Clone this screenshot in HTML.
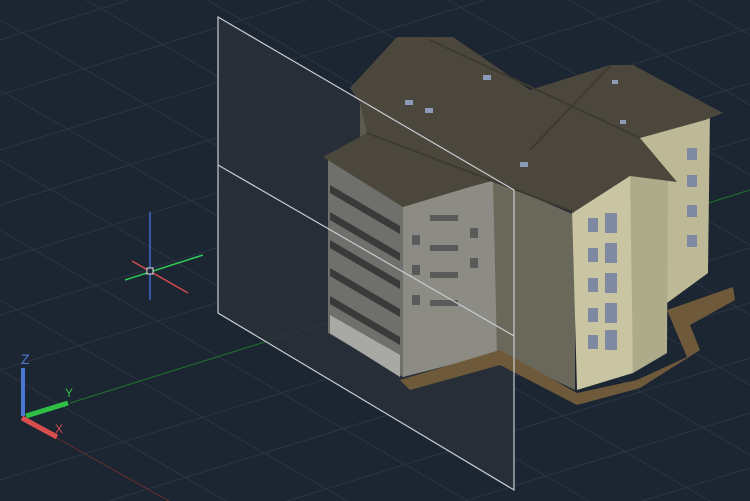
<!DOCTYPE html>
<html><head><style>html,body{margin:0;padding:0;background:#1c2532;overflow:hidden;width:750px;height:501px}svg{display:block;overflow:hidden}</style></head>
<body>
<svg width="750" height="501" viewBox="0 0 750 501" xmlns="http://www.w3.org/2000/svg" font-family="Liberation Sans, sans-serif">
<rect width="750" height="501" fill="#1c2532"/>
<g stroke="#2b3543" stroke-width="1">
<line x1="0" y1="40" x2="129" y2="0"/><line x1="0" y1="95" x2="306" y2="0"/><line x1="0" y1="150" x2="484" y2="0"/><line x1="0" y1="205" x2="661" y2="0"/><line x1="0" y1="260" x2="750" y2="28"/><line x1="0" y1="315" x2="750" y2="83"/><line x1="0" y1="370" x2="750" y2="138"/><line x1="0" y1="480" x2="750" y2="248"/><line x1="109" y1="501" x2="750" y2="303"/><line x1="287" y1="501" x2="750" y2="358"/><line x1="465" y1="501" x2="750" y2="413"/><line x1="642" y1="501" x2="750" y2="468"/>
<line x1="688" y1="0" x2="750" y2="35"/><line x1="569" y1="0" x2="750" y2="105"/><line x1="448" y1="0" x2="750" y2="175"/><line x1="328" y1="0" x2="750" y2="245"/><line x1="207" y1="0" x2="750" y2="315"/><line x1="86" y1="0" x2="750" y2="385"/><line x1="0" y1="20" x2="750" y2="455"/><line x1="0" y1="90" x2="710" y2="501"/><line x1="0" y1="160" x2="589" y2="501"/><line x1="0" y1="230" x2="468" y2="501"/><line x1="0" y1="300" x2="347" y2="501"/><line x1="0" y1="370" x2="226" y2="501"/>
</g>
<line x1="70" y1="403" x2="750" y2="190" stroke="#1f6a2c" stroke-width="1.2"/>
<line x1="55" y1="437" x2="169" y2="501" stroke="#6a2e2e" stroke-width="1"/>
<polygon points="218,17 514,190 514,490 218,313" fill="#2a3038" fill-opacity="0.85"/>
<polygon points="360,103 400,95 403,207 360,170" fill="#5d5a4e"/>
<polygon points="633,130 710,110 708,273 667,303 660,175" fill="#bdb896"/>
<polygon points="628,175 668,178 667,353 633,373" fill="#aeab8b"/>
<polygon points="328,157 403,207 403,377 328,333" fill="#6f706c"/>
<g fill="#3a3a3a"><polygon points="330,185 400,226 400,234 330,193"/><polygon points="330,212 400,253 400,261 330,220"/><polygon points="330,240 400,281 400,289 330,248"/><polygon points="330,268 400,309 400,317 330,276"/><polygon points="330,296 400,337 400,345 330,304"/></g>
<polygon points="330,315 400,355 400,377 330,333" fill="#a8a9a5"/>
<polygon points="403,205 495,180 497,353 403,377" fill="#8d8c84"/>
<polygon points="493,180 575,215 575,390 497,353" fill="#6a685a"/>
<polygon points="572,208 630,174 633,373 577,390" fill="#c9c5a2"/>
<g fill="#7f8aa0"><rect x="588" y="218" width="10" height="14"/><rect x="605" y="213" width="12" height="20"/><rect x="588" y="248" width="10" height="14"/><rect x="605" y="243" width="12" height="20"/><rect x="588" y="278" width="10" height="14"/><rect x="605" y="273" width="12" height="20"/><rect x="588" y="308" width="10" height="14"/><rect x="605" y="303" width="12" height="20"/><rect x="588" y="335" width="10" height="14"/><rect x="605" y="330" width="12" height="20"/><rect x="687" y="148" width="10" height="12"/><rect x="687" y="175" width="10" height="12"/><rect x="687" y="205" width="10" height="12"/><rect x="687" y="235" width="10" height="12"/></g>
<g fill="#5a5a5a"><rect x="430" y="215" width="28" height="6"/><rect x="430" y="245" width="28" height="6"/><rect x="430" y="272" width="28" height="6"/><rect x="430" y="300" width="28" height="6"/><rect x="412" y="235" width="8" height="10"/><rect x="412" y="265" width="8" height="10"/><rect x="412" y="295" width="8" height="10"/><rect x="470" y="228" width="8" height="10"/><rect x="470" y="258" width="8" height="10"/></g>
<polygon points="400,380 500,350 577,393 637,380 687,357 667,310 733,287 735,300 690,325 700,350 640,388 577,405 500,365 410,390" fill="#6e5a3a"/>
<polygon points="350,88 397,37 453,37 530,90 610,65 633,65 723,113 705,120 640,138 677,182 630,176 574,212 493,180 403,207 323,157 367,133 360,103" fill="#4b473c"/>
<g stroke="#3e3a31" stroke-width="2" fill="none"><line x1="367" y1="133" x2="574" y2="212"/><line x1="430" y1="40" x2="640" y2="138"/><line x1="610" y1="66" x2="530" y2="150"/></g>
<g fill="#8b9bb8"><rect x="405" y="100" width="8" height="5"/><rect x="425" y="108" width="8" height="5"/><rect x="483" y="75" width="8" height="5"/><rect x="520" y="162" width="8" height="5"/><rect x="612" y="80" width="6" height="4"/><rect x="620" y="120" width="6" height="4"/></g>
<g stroke="#c8ccd2" stroke-width="1.2" fill="none"><polygon points="218,17 514,190 514,490 218,313"/><line x1="218" y1="165" x2="514" y2="336"/></g>
<line x1="150" y1="212" x2="150" y2="300" stroke="#3e6ad0" stroke-width="1.5"/>
<line x1="125" y1="280" x2="203" y2="255" stroke="#2ecc55" stroke-width="1.5"/>
<line x1="132" y1="261" x2="188" y2="293" stroke="#d04c4c" stroke-width="1.5"/>
<rect x="147" y="268" width="6" height="6" fill="#1c2532" stroke="#e0e0e0" stroke-width="1"/>
<line x1="23" y1="368" x2="23" y2="416" stroke="#4a78d0" stroke-width="4"/>
<line x1="26" y1="416" x2="68" y2="403" stroke="#2fbf45" stroke-width="5"/>
<line x1="22" y1="418" x2="57" y2="437" stroke="#d84e4e" stroke-width="5"/>
<text x="21" y="364" font-size="14" fill="#4a78d0">Z</text>
<text x="65" y="397" font-size="12" fill="#2fbf45">Y</text>
<text x="55" y="433" font-size="12" fill="#d84e4e">X</text>
</svg>
</body></html>
